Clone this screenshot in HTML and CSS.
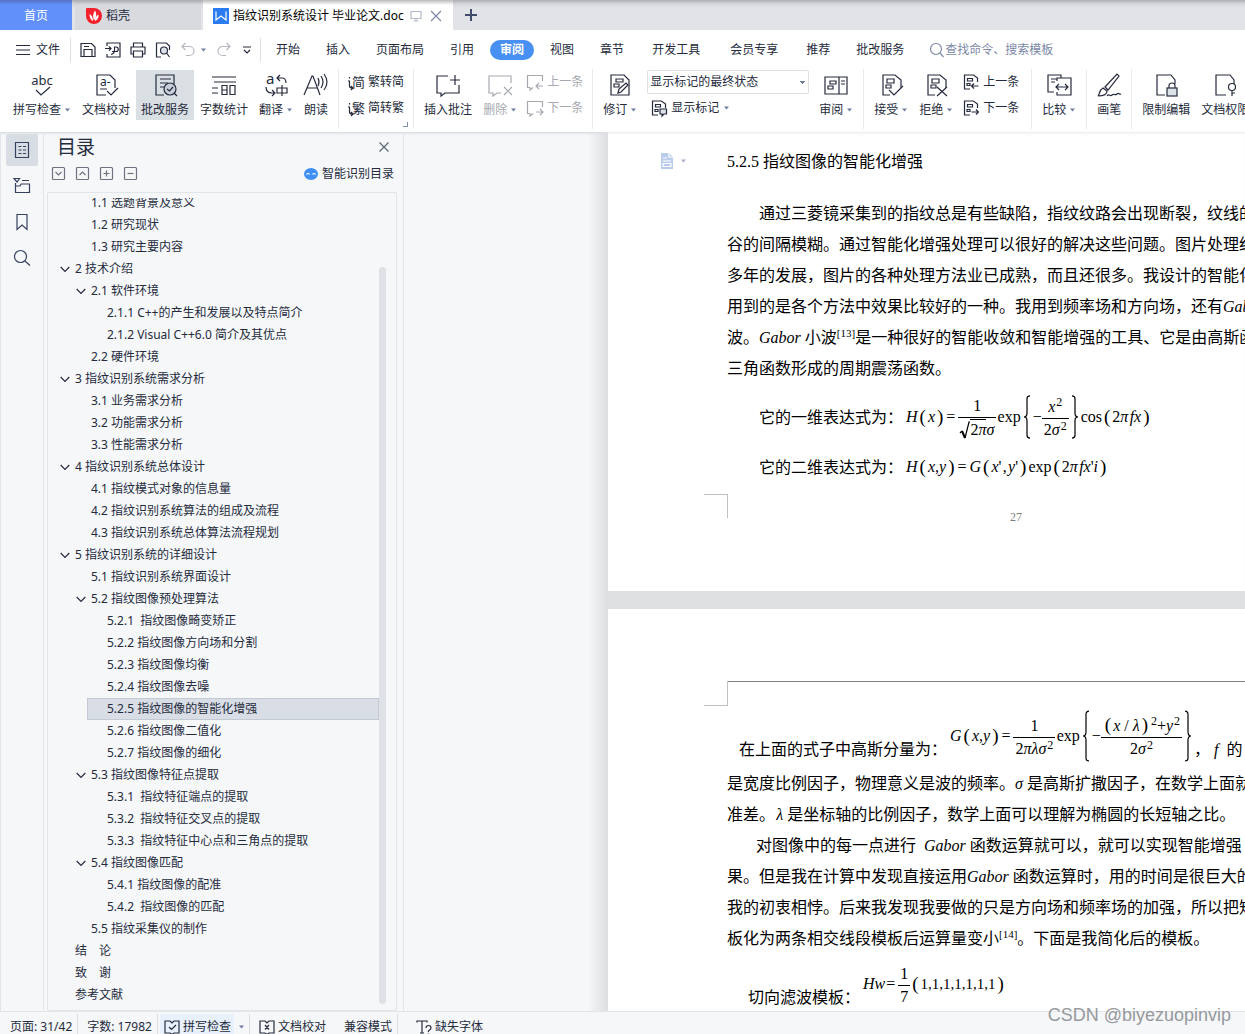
FILE: index.html
```html
<!DOCTYPE html>
<html lang="zh-CN">
<head>
<meta charset="utf-8">
<title>指纹识别系统设计 毕业论文.doc</title>
<link rel="stylesheet" href="styles.css">
</head>
<body>
<svg class="defs" aria-hidden="true">
  <symbol id="caret" viewBox="0 0 7 4"><path d="M1 0.5h5L3.500 3.500z" fill="#6f7ba0" stroke="none"/></symbol>
  <symbol id="chev" viewBox="0 0 10 10"><path d="M0.700 3l4.300 4.300L9.300 3"/></symbol>
  <symbol id="markdoc" viewBox="0 0 24 24"><path d="M11 22H4V2h12l6 5v8M8 6h7v4H8zM7 12h5v3H7z"/></symbol>
  <symbol id="markprev" viewBox="0 0 16 16"><path d="M7 15H1.500V1h9l4 3v4M4.500 4.500h5v2.500h-5zM4 9.500h3v2H4zM15.500 12H8.500M11 9.500L8.500 12l2.500 2.500"/></symbol>
  <symbol id="marknext" viewBox="0 0 16 16"><path d="M7 15H1.500V1h9l4 3v4M4.500 4.500h5v2.500h-5zM4 9.500h3v2H4zM8.500 12h7M13 9.500l2.500 2.500-2.500 2.500"/></symbol>
  <symbol id="brace" viewBox="0 0 8 48" preserveAspectRatio="none"><path d="M7 1Q4 1 4 4V20Q4 24 1 24Q4 24 4 28V44Q4 47 7 47" vector-effect="non-scaling-stroke"/></symbol>
</svg>

<header class="tabbar">
  <button class="tab tab-home">首页</button>
  <button class="tab tab-docer"><svg class="i16" viewBox="0 0 16 16" stroke="none"><path d="M8 0H1a1 1 0 0 0-1 1v7a8 8 0 1 0 8-8z" fill="#f5222d" stroke="none"/><path d="M9 2.500c2 3 1.500 7-1 10C6.500 9 7 5 9 2.500zM3.500 6C6 7.500 7 9.500 7 13 4.500 12 3.500 9 3.500 6zM12.500 6.500c.5 3-1 5.500-3.500 6.500 0-3 1-5 3.500-6.500z" fill="#fff" stroke="none"/></svg>稻壳</button>
  <div class="tab tab-doc"><svg class="i16" viewBox="0 0 16 16"><rect width="16" height="16" fill="#2b7cf0" stroke="none"/><path d="M3 3.500v8.500l5-4 5 4V3.500" stroke="#fff"/></svg><span>指纹识别系统设计 毕业论文.doc</span>
    <svg class="i12 faint" viewBox="0 0 12 12"><path d="M1 1.500h10v7H1zM6 8.500v2.500M3.500 11h5"/></svg>
    <button class="plain" aria-label="关闭标签"><svg class="i12 mid" viewBox="0 0 12 12"><path d="M1 1l10 10M11 1L1 11"/></svg></button></div>
  <button class="plain newtab" aria-label="新建"><svg class="i12" viewBox="0 0 12 12"><path d="M6 0v12M0 6h12"/></svg></button>
</header>

<nav class="menubar">
  <button class="plain file"><svg class="i14" viewBox="0 0 14 14"><path d="M0 2.500h14M0 7h14M0 11.500h14"/></svg>文件</button>
  <div class="quick">
    <button class="plain" aria-label="保存"><svg class="i16" viewBox="0 0 16 16"><path d="M1 1.500h10.500L15 5v9.500H1zM4 14.500V7.500h8v7M4 4.500h5"/></svg></button>
    <button class="plain" aria-label="输出为PDF"><svg class="i16" viewBox="0 0 16 16"><path d="M2 4V1h13v14H2v-3M0 6.500h6M4 4.500l2 2-2 2M6 12.500c3-.5 4-3 3.500-7.500h1.500a2 2 0 0 1 0 4.500H7"/></svg></button>
    <button class="plain" aria-label="打印"><svg class="i16" viewBox="0 0 16 16"><path d="M3.500 5V1h9v4M3.500 12H1V5h14v7h-2.500M3.500 9h9v6h-9z"/></svg></button>
    <button class="plain" aria-label="打印预览"><svg class="i16" viewBox="0 0 16 16"><path d="M6 15H1.500V1h10l3 3v4"/><circle cx="9" cy="8.500" r="3.500" fill="#dde1e8"/><path d="M11.500 11l3 4"/></svg></button>
    <button class="plain undo" aria-label="撤销"><svg class="i16 pale" viewBox="0 0 16 16"><path d="M5.500 1L2 4.500 5.500 8M2 4.500h7.500a4.500 4.500 0 0 1 0 9H6"/></svg><svg class="caret"><use href="#caret"/></svg></button>
    <button class="plain redo" aria-label="恢复"><svg class="i16 pale" viewBox="0 0 16 16"><path d="M10.500 1L14 4.500 10.500 8M14 4.500H6.500a4.500 4.500 0 0 0 0 9H10"/></svg></button>
    <button class="plain" aria-label="自定义"><svg class="i12" viewBox="0 0 12 12"><path d="M2 3h8M3 6l3 3 3-3"/></svg></button>
  </div>
  <div class="menus">
    <button class="menu">开始</button><button class="menu">插入</button><button class="menu">页面布局</button><button class="menu">引用</button><button class="menu active">审阅</button><button class="menu">视图</button><button class="menu">章节</button><button class="menu wide">开发工具</button><button class="menu wide">会员专享</button><button class="menu">推荐</button><button class="menu">批改服务</button>
  </div>
  <label class="search"><svg class="i16 mid" viewBox="0 0 16 16"><circle cx="7" cy="7" r="5.500"/><path d="M11 11l3.500 4"/></svg><input type="text" placeholder="查找命令、搜索模板" aria-label="查找命令、搜索模板"></label>
</nav>

<div class="ribbon">
  <div class="group">
    <button class="big"><svg class="i24" viewBox="0 0 24 24"><text x="12" y="12" text-anchor="middle" class="t13">abc</text><path d="M6 17l5 5 9-8"/></svg><span>拼写检查<svg class="caret"><use href="#caret"/></svg></span></button>
    <button class="big"><svg class="i24" viewBox="0 0 24 24"><path d="M12 22H3V2h13l5 5v8M6 16h7M13 18l4 4 7-7"/><text x="6" y="13" class="t12">a-</text></svg><span>文档校对</span></button>
    <button class="big on"><svg class="i24" viewBox="0 0 24 24"><path d="M11 22H3V2h18v9M7 6h11M7 10h8M7 14h4"/><circle cx="17" cy="16" r="6" fill="#c9ced8"/><path d="M21 20l3 3M14 16l2.500 2 3.500-4"/></svg><span>批改服务</span></button>
    <button class="big"><svg class="i24" viewBox="0 0 24 24"><path d="M0 4h24M2 9h22M0 15h6M0 20h6M10 12.500h5v9h-5zM10 17h5M18 12.500h5v9h-5z"/></svg><span>字数统计</span></button>
    <button class="big"><svg class="i24" viewBox="0 0 24 24"><text x="2" y="11" class="t15">a</text><path d="M16 2l-3 3 3 3M13 5h5q4 0 4 5M2 14q0 6 6 6h2M8 17l3 3-3 3M13 15h10v5H13zM18 12v11"/></svg><span>翻译<svg class="caret"><use href="#caret"/></svg></span></button>
    <button class="big"><svg class="i24" viewBox="0 0 24 24"><path d="M0 22L8 3h1l7 19M3 15h10M14 5q2 4 0 8M17 3q4 6 0 12M20 1q6 8 0 16"/></svg><span>朗读</span></button>
  </div>
  <div class="group corner">
    <div class="stack">
      <button class="small"><svg class="i16" viewBox="0 0 16 16"><text x="4" y="13" class="t13">简</text><path d="M1.500 3v1.500M0 7h1.500v5q0 2 3 2M3 12l2 2-2 2"/></svg>繁转简</button>
      <button class="small"><svg class="i16" viewBox="0 0 16 16"><text x="4" y="13" class="t13">繁</text><path d="M1.500 3v1.500M0 7h1.500v5q0 2 3 2M3 12l2 2-2 2"/></svg>简转繁</button>
    </div>
  </div>
  <div class="group">
    <button class="big"><svg class="i24" viewBox="0 0 24 24"><path d="M12 3H1v17h4v3l4-3h14v-8M19 2v10M14 7h10"/></svg><span>插入批注</span></button>
    <button class="big off"><svg class="i24" viewBox="0 0 24 24"><path d="M23 10V3H1v17h4v3l4-3h4M16 14l8 8M24 14l-8 8"/></svg><span>删除<svg class="caret"><use href="#caret"/></svg></span></button>
    <div class="stack">
      <button class="small off"><svg class="i16" viewBox="0 0 16 16"><path d="M15.500 7V1.500H.5v12H3V16l3-2.500M16 12H9M12 9l-3 3 3 3"/></svg>上一条</button>
      <button class="small off"><svg class="i16" viewBox="0 0 16 16"><path d="M15.500 7V1.500H.5v12H3V16l3-2.500M9 12h7M13 9l3 3-3 3"/></svg>下一条</button>
    </div>
  </div>
  <div class="group">
    <button class="big"><svg class="i24" viewBox="0 0 24 24"><path d="M3 22V2h13l5 5v15zM8 6h7v3H8zM6 11h5v3H6z"/><path d="M10 20l1-4 7-6 2 2-7 7z" fill="#fff"/></svg><span>修订<svg class="caret"><use href="#caret"/></svg></span></button>
    <div class="stack">
      <select class="view" aria-label="显示状态"><option>显示标记的最终状态</option></select>
      <button class="small marks"><svg class="i16" viewBox="0 0 16 16"><path d="M7 15H1.500V1h9l4 3v4M4.500 4.500h5v2.500h-5zM4 9.500h3v2H4z"/><path d="M9 9h6.500v5H13l-2 2v-2H9z" fill="#dde1e8"/></svg>显示标记<svg class="caret"><use href="#caret"/></svg></button>
    </div>
    <button class="big"><svg class="i24" viewBox="0 0 24 24"><path d="M1 4h22v17H1zM15 4v17M6 8h6v3H6zM4 13h5v3H4zM17 8h4M17 11h4"/></svg><span>审阅<svg class="caret"><use href="#caret"/></svg></span></button>
  </div>
  <div class="group roomy">
    <button class="big"><svg class="i24" viewBox="0 0 24 24"><use href="#markdoc"/><path d="M10 17l5 5 9-9"/></svg><span>接受<svg class="caret"><use href="#caret"/></svg></span></button>
    <button class="big"><svg class="i24" viewBox="0 0 24 24"><use href="#markdoc"/><path d="M13 14l10 9M23 14l-10 9"/></svg><span>拒绝<svg class="caret"><use href="#caret"/></svg></span></button>
    <div class="stack">
      <button class="small"><svg class="i16"><use href="#markprev"/></svg>上一条</button>
      <button class="small"><svg class="i16"><use href="#marknext"/></svg>下一条</button>
    </div>
  </div>
  <div class="group">
    <button class="big"><svg class="i24" viewBox="0 0 24 24"><path d="M7 19H1V2h13v3M4 6h6M4 9h4M10 8V5h14v17H10v-3M9 14h12M12 11l-3 3 3 3M18 11l3 3-3 3"/></svg><span>比较<svg class="caret"><use href="#caret"/></svg></span></button>
  </div>
  <div class="group">
    <button class="big"><svg class="i24" viewBox="0 0 24 24"><path d="M8 14L20 1l2 2-11 14zM1 23c2-2 1-6 5-8l4 3c0 4-5 5-9 5M10 23c2-3 3 1 5-1s3 1 5-1 2 1 4 0"/></svg><span>画笔</span></button>
  </div>
  <div class="group last">
    <button class="big"><svg class="i24" viewBox="0 0 24 24"><path d="M11 22H3V2h14l4 5v4"/><path d="M15 15v-2a3 3 0 0 1 6 0v2"/><rect x="13" y="15" width="10" height="8" fill="#dde1e8"/></svg><span>限制编辑</span></button>
    <button class="big"><svg class="i24" viewBox="0 0 24 24"><path d="M13 22H3V2h14l4 5v4"/><circle cx="19" cy="14" r="3.500"/><path d="M19 17.500V23M19 20h3"/></svg><span>文档权限</span></button>
  </div>
</div>

<main class="work">
  <nav class="rail">
    <button class="railbtn on" aria-label="目录"><svg class="i16" viewBox="0 0 16 16"><path d="M1.500.5h13v15h-13zM4.500 4.500h3M4.500 8h3M4.500 11.500h3M9 4.500h3M9 8h3M9 11.500h3"/></svg></button>
    <button class="railbtn" aria-label="章节"><svg class="i16" viewBox="0 0 16 16"><path d="M0 .5h5.500L3 4zM8 2.500h7M1.500 5v9.500h14V6H7L6 8H1.500"/></svg></button>
    <button class="railbtn" aria-label="书签"><svg class="i16" viewBox="0 0 16 16"><path d="M3 .5h10v15l-5-4.500-5 4.500z"/></svg></button>
    <button class="railbtn" aria-label="查找"><svg class="i16" viewBox="0 0 16 16"><circle cx="6.500" cy="6.500" r="6"/><path d="M11 11l5 4.500"/></svg></button>
  </nav>
  <aside class="panel">
    <div class="panel-head"><h2>目录</h2><button class="plain" aria-label="关闭"><svg class="i10" viewBox="0 0 10 10"><path d="M.5.5l9 9M9.500.5l-9 9"/></svg></button></div>
    <div class="tools">
      <button class="plain" aria-label="展开"><svg class="i14" viewBox="0 0 14 14"><rect x=".5" y=".5" width="12" height="12" rx="1"/><path d="M3.500 5l3 3 3-3"/></svg></button>
      <button class="plain" aria-label="收起"><svg class="i14" viewBox="0 0 14 14"><rect x=".5" y=".5" width="12" height="12" rx="1"/><path d="M3.500 8l3-3 3 3"/></svg></button>
      <button class="plain" aria-label="增加"><svg class="i14" viewBox="0 0 14 14"><rect x=".5" y=".5" width="12" height="12" rx="1"/><path d="M3.500 6.500h6M6.500 3.500v6"/></svg></button>
      <button class="plain" aria-label="减少"><svg class="i14" viewBox="0 0 14 14"><rect x=".5" y=".5" width="12" height="12" rx="1"/><path d="M3.500 6.500h6"/></svg></button>
      <button class="plain smart"><svg class="i14" viewBox="0 0 14 14"><ellipse cx="7" cy="7" rx="7" ry="6" fill="#3f8ff5" stroke="none"/><path d="M2.500 7.500q1.500-2 3 0M8.500 7.500q1.500-2 3 0" stroke="#fff"/></svg>智能识别目录</button>
    </div>
    <div class="listbox">
      <ul class="toc">
        <li class="l2">1.1 选题背景及意义</li>
        <li class="l2">1.2 研究现状</li>
        <li class="l2">1.3 研究主要内容</li>
        <li class="l1"><svg class="chev"><use href="#chev"/></svg>2 技术介绍</li>
        <li class="l2"><svg class="chev"><use href="#chev"/></svg>2.1 软件环境</li>
        <li class="l3">2.1.1 C++的产生和发展以及特点简介</li>
        <li class="l3">2.1.2 Visual C++6.0 简介及其优点</li>
        <li class="l2">2.2 硬件环境</li>
        <li class="l1"><svg class="chev"><use href="#chev"/></svg>3 指纹识别系统需求分析</li>
        <li class="l2">3.1 业务需求分析</li>
        <li class="l2">3.2 功能需求分析</li>
        <li class="l2">3.3 性能需求分析</li>
        <li class="l1"><svg class="chev"><use href="#chev"/></svg>4 指纹识别系统总体设计</li>
        <li class="l2">4.1 指纹模式对象的信息量</li>
        <li class="l2">4.2 指纹识别系统算法的组成及流程</li>
        <li class="l2">4.3 指纹识别系统总体算法流程规划</li>
        <li class="l1"><svg class="chev"><use href="#chev"/></svg>5 指纹识别系统的详细设计</li>
        <li class="l2">5.1 指纹识别系统界面设计</li>
        <li class="l2"><svg class="chev"><use href="#chev"/></svg>5.2 指纹图像预处理算法</li>
        <li class="l3">5.2.1&nbsp; 指纹图像畸变矫正</li>
        <li class="l3">5.2.2 指纹图像方向场和分割</li>
        <li class="l3">5.2.3 指纹图像均衡</li>
        <li class="l3">5.2.4 指纹图像去噪</li>
        <li class="l3 sel">5.2.5 指纹图像的智能化增强</li>
        <li class="l3">5.2.6 指纹图像二值化</li>
        <li class="l3">5.2.7 指纹图像的细化</li>
        <li class="l2"><svg class="chev"><use href="#chev"/></svg>5.3 指纹图像特征点提取</li>
        <li class="l3">5.3.1&nbsp; 指纹特征端点的提取</li>
        <li class="l3">5.3.2&nbsp; 指纹特征交叉点的提取</li>
        <li class="l3">5.3.3&nbsp; 指纹特征中心点和三角点的提取</li>
        <li class="l2"><svg class="chev"><use href="#chev"/></svg>5.4 指纹图像匹配</li>
        <li class="l3">5.4.1 指纹图像的配准</li>
        <li class="l3">5.4.2&nbsp; 指纹图像的匹配</li>
        <li class="l2">5.5 指纹采集仪的制作</li>
        <li class="l1">结　论</li>
        <li class="l1">致　谢</li>
        <li class="l1">参考文献</li>
      </ul>
      <div class="track"><div class="thumb"></div></div>
    </div>
  </aside>
  <section class="canvas">
    <article class="page first">
      <div class="heading"><svg class="i16" viewBox="0 0 16 16"><path d="M2 0h8l4 4v12H2z" fill="#b9cce9" stroke="none"/><path d="M10 0v4h4M4 5h4M4 8h8M4 10.500h8v3H4z" stroke="#fff"/></svg><svg class="caret"><use href="#caret"/></svg><h3>5.2.5 指纹图像的智能化增强</h3></div>
      <div class="text">
        <p class="ind">通过三菱镜采集到的指纹总是有些缺陷，指纹纹路会出现断裂，纹线的</p>
        <p>谷的间隔模糊。通过智能化增强处理可以很好的解决这些问题。图片处理经</p>
        <p>多年的发展，图片的各种处理方法业已成熟，而且还很多。我设计的智能化</p>
        <p>用到的是各个方法中效果比较好的一种。我用到频率场和方向场，还有<i>Gabor</i></p>
        <p>波。<i>Gabor</i> 小波<sup>[13]</sup>是一种很好的智能收敛和智能增强的工具、它是由高斯函</p>
        <p>三角函数形成的周期震荡函数。</p>
      </div>
      <div class="eq eq-a"><span>它的一维表达式为：</span>
        <span class="math"><i>H</i><b>(</b><i>x</i><b>)</b><span class="op">=</span><span class="frac"><span>1</span><span class="den"><svg class="root" viewBox="0 0 10 18"><path d="M0 12l2-2"/><path d="M2 10l3 7" stroke-width="2"/><path d="M5 17L9 1h1"/></svg><span class="rad">2<i>π</i></span><i>σ</i></span></span>&#8202;exp<svg class="brace h44"><use href="#brace"/></svg><span>−</span><span class="frac"><span><i>x</i><sup>2</sup></span><span class="den">2<i>σ</i><sup>2</sup></span></span><svg class="brace h44 flip"><use href="#brace"/></svg>cos<b>(</b>2<i>π</i>&#8202;<i>fx</i><b>)</b></span></div>
      <div class="eq eq-b"><span>它的二维表达式为：</span>
        <span class="math"><i>H</i><b>(</b><i>x</i>,<i>y</i><b>)</b><span class="op">=</span><i>G</i><b>(</b><i>x</i>'&#8202;,&#8202;<i>y</i>'<b>)</b>exp<b>(</b>2<i>π</i>&#8202;<i>fx</i>'<i>i</i><b>)</b></span></div>
      <div class="foot"><div class="crop-bottom"></div><span>27</span></div>
    </article>
    <article class="page second">
      <div class="head"><div class="crop-top"></div><div class="rule"></div></div>
      <div class="eq eq-c"><span>在上面的式子中高斯分量为：</span>
        <span class="math raised"><i>G</i><b>(</b><i>x</i>,<i>y</i><b>)</b><span class="op">=</span><span class="frac"><span>1</span><span class="den">2<i>πλσ</i><sup>2</sup></span></span>&#8202;exp<svg class="brace h52"><use href="#brace"/></svg><span>−</span><span class="frac"><span><b>(</b><i>x</i> / <i>λ</i><b>)</b><sup>2</sup>+<i>y</i><sup>2</sup></span><span class="den">2<i>σ</i><sup>2</sup></span></span><svg class="brace h52 flip"><use href="#brace"/></svg></span><span>，&nbsp;<i>f</i>&nbsp; 的</span></div>
      <div class="text">
        <p>是宽度比例因子，物理意义是波的频率。<i>σ</i> 是高斯扩撒因子，在数学上面就</p>
        <p>准差。&#8202;<i>λ</i> 是坐标轴的比例因子，数学上面可以理解为椭圆的长短轴之比。</p>
        <p class="ind">对图像中的每一点进行&nbsp; <i>Gabor</i> 函数运算就可以，就可以实现智能增强</p>
        <p>果。但是我在计算中发现直接运用<i>Gabor</i> 函数运算时，用的时间是很巨大的</p>
        <p>我的初衷相悖。后来我发现我要做的只是方向场和频率场的加强，所以把矩</p>
        <p>板化为两条相交线段模板后运算量变小<sup>[14]</sup>。下面是我简化后的模板。</p>
      </div>
      <div class="eq eq-d"><span>切向滤波模板：</span>
        <span class="math raised"><i>Hw</i><span class="op">=</span><span class="frac"><span>1</span><span class="den">7</span></span><b>(</b><span class="nums">1,1,1,1,1,1,1</span><b>)</b></span></div>
    </article>
  </section>
</main>

<footer class="status">
  <span class="st">页面: 31/42</span><span class="st">字数: 17982</span>
  <button class="st hot"><span><svg class="i16" viewBox="0 0 16 16"><path d="M6 2H1v12h5l2 1.500L10 14h5V2h-5L8 4zM5 8l2.500 2.500L12 6"/></svg>拼写检查</span><svg class="caret"><use href="#caret"/></svg></button>
  <button class="st open"><svg class="i16" viewBox="0 0 16 16"><path d="M6 2H1v12h5l2 1.500L10 14h5V2h-5L8 4zM6 6l4 4.500M10 6l-4 4.500"/></svg>文档校对</button>
  <button class="st compat">兼容模式</button>
  <button class="st open"><svg class="i16" viewBox="0 0 16 16"><path d="M1 3.500V2h10v1.500M6 2v12M4 14h4M10 9q0-2.500 2.500-2.500T15 9q0 1-1.500 2t-1 2M12.500 14.500v1"/></svg>缺失字体</button>
</footer>
<div class="watermark">CSDN @biyezuopinvip</div>
</body>
</html>
```
FILE: styles.css
```css
* { box-sizing: border-box; }
body {
  margin: 0;
  height: 100vh;
  display: flex;
  flex-direction: column;
  overflow: hidden;
  background: #fff;
  color: #252b3d;
  font: 12px/16px "Noto Sans", "Noto Sans CJK SC", sans-serif;
}
button, input, select { font: inherit; color: inherit; }
button { border: 0; background: none; padding: 0; white-space: nowrap; flex: none; }
svg { fill: none; stroke: currentColor; stroke-width: 1.2; flex: none; display: block; overflow: visible; }
svg text { fill: currentColor; stroke: none; }
h2, h3, p, ul { margin: 0; padding: 0; font-weight: 400; }
.defs { position: absolute; width: 0; height: 0; overflow: hidden; }
.plain { display: flex; align-items: center; }
.i10 { width: 10px; height: 10px; }
.i12 { width: 12px; height: 12px; }
.i14 { width: 14px; height: 14px; }
.i16 { width: 16px; height: 16px; }
.i24 { width: 24px; height: 24px; }
.t12 { font-size: 12px; }
.t13 { font-size: 13px; }
.t15 { font-size: 15px; }
.caret { width: 7px; height: 4px; }
.faint { color: #b3bccd; }
.mid { color: #7c88a6; }
.pale { color: #b4b8c0; }

/* document tabs */
.tabbar {
  flex: none;
  height: 30px;
  display: flex;
  background: linear-gradient(#aeafb2, #d5d6da 4px, #e2e3e7 8px);
}
.tab { display: flex; align-items: center; gap: 4px; height: 30px; padding-top: 2px; }
.tab-home { width: 72px; justify-content: center; background: linear-gradient(#5573c4, #6190fb 5px); color: #fff; }
.tab-docer { width: 126px; margin-left: 3px; padding-left: 11px; background: linear-gradient(#a9aaad, #d9dadd 5px); }
.tab-doc { width: 250px; margin-left: 2px; padding: 2px 10px 0; background: linear-gradient(#bbb, #fff 5px); color: #000; white-space: nowrap; }
.tab-doc .faint { margin-left: 2px; }
.tab-doc .plain { margin-left: 4px; }
.newtab { padding: 0 12px; color: #414b6b; }
.newtab svg { stroke-width: 2; }

/* menu row */
.menubar { flex: none; height: 38px; display: flex; align-items: center; padding-top: 1px; }
.file { gap: 6px; padding: 0 10px 0 16px; }
.quick { display: flex; align-items: center; gap: 9px; height: 24px; padding: 0 7px 0 9px; border: solid #dcdfe4; border-width: 0 1px; }
.undo { gap: 4px; }
.menus { display: flex; padding-left: 2px; }
.menu { height: 20px; padding: 0 13px; }
.menu.wide { padding: 0 15px; }
.menu.active { margin: 0 3px; padding: 0 10px; border-radius: 10px; background: #4890f3; color: #fff; font-weight: 700; }
.search { display: flex; align-items: center; padding-left: 12px; }
.search input { border: 0; outline: 0; padding: 0; width: 120px; background: none; }
.search input::placeholder { color: #7c88a6; opacity: 1; }

/* ribbon */
.ribbon { flex: none; display: flex; height: 64px; padding: 1px 0 3px 3px; overflow: hidden; }
.group { flex: none; display: flex; gap: 1px; align-items: flex-start; padding: 1px 5px; border-right: 1px solid #e9ebef; }
.group.roomy { padding-right: 8px; }
.group.last { border: 0; }
.corner { background: linear-gradient(#8490ad, #8490ad) right 5px bottom 2px / 5px 1px no-repeat, linear-gradient(#8490ad, #8490ad) right 5px bottom 2px / 1px 5px no-repeat; }
.big { display: flex; flex-direction: column; align-items: center; gap: 5px; height: 50px; padding: 3px 5px; }
.big span { display: flex; align-items: center; }
.big .caret { margin-left: 3px; }
.on { background: #dadfe4; }
.off { color: #a6a9b0; }
.stack { display: flex; flex-direction: column; gap: 2px; padding: 0 4px; }
.small { display: flex; align-items: center; gap: 4px; height: 24px; }
.marks { padding-left: 4px; }
.view {
  width: 162px;
  height: 24px;
  padding: 0 2px;
  appearance: none;
  border: 1px solid #dcdfe4;
  border-radius: 2px;
  background: linear-gradient(45deg, transparent 50%, #6f7ba0 50%) right 6px center / 3px 3px no-repeat, linear-gradient(315deg, transparent 50%, #6f7ba0 50%) right 3px center / 3px 3px no-repeat, #fff;
}

/* work area */
.work { flex: 1; min-height: 0; display: flex; background: #f5f7f9; border-bottom: 1px solid #e2e5ea; box-shadow: inset 0 3px 3px -2px #cfd3d8; }
.rail { flex: none; width: 44px; display: flex; flex-direction: column; gap: 4px; padding: 2px 0 0 5px; border: solid #e2e5ea; border-width: 0 1px; }
.railbtn { width: 32px; height: 32px; display: flex; align-items: center; justify-content: center; border-radius: 2px; color: #36415f; }
.railbtn.on { background: #d8dde4; }
.panel { flex: none; width: 360px; display: flex; flex-direction: column; padding: 0 6px 0 3px; border-right: 1px solid #e2e5ea; }
.panel-head { display: flex; align-items: center; justify-content: space-between; height: 30px; padding: 0 8px 0 10px; }
.panel-head h2 { font-size: 19px; line-height: 28px; }
.panel-head button { color: #5d6676; }
.tools { display: flex; align-items: center; gap: 10px; height: 24px; padding: 0 3px 0 5px; color: #6d737e; }
.smart { margin-left: auto; gap: 4px; color: #252b3d; }
.listbox { flex: 1; min-height: 0; display: flex; margin-top: 6px; padding-top: 5px; border: 1px solid #e2e5ea; border-radius: 2px; }
.toc { flex: 1; overflow: hidden; list-style: none; }
.toc li { height: 22px; line-height: 20px; border: 1px solid transparent; display: flex; align-items: center; white-space: pre; padding-left: 19px; }
.toc li:first-child { margin-top: -6px; }
.toc .l1 { margin-left: 7px; }
.toc .l2 { margin-left: 23px; }
.toc .l3 { margin-left: 39px; }
.toc .sel { background: #d9dde5; border-color: #c3cad3; }
.chev { width: 10px; height: 10px; margin: 0 5px 0 -15px; }
.track { display: flex; width: 17px; padding: 69px 10px 6px 0; }
.thumb { flex: 1; border-radius: 4px; background: #dee2e6; }

/* document canvas */
.canvas {
  flex: 1;
  min-width: 0;
  display: flex;
  flex-direction: column;
  gap: 18px;
  padding-left: 204px;
  overflow: hidden;
  background: linear-gradient(90deg, transparent 184px, #dcdee1 204px, #dfe0e2 204px);
  color: #000;
  font: 16px/31px "Liberation Serif", "Noto Sans CJK SC", serif;
  white-space: nowrap;
}
.page { flex: none; background: #fff; overflow: hidden; box-shadow: inset 0 3px 3px -2px #e4e6e8; }
.page.first { padding-bottom: 73px; }
.page.second { flex: 1; box-shadow: none; }
.heading { display: flex; align-items: center; gap: 5px; height: 58px; padding-left: 51px; }
.heading h3 { font-size: 16px; padding-left: 35px; }
.heading .caret { opacity: .6; }
.text { padding: 8px 0 0 119px; }
.second .text { padding-top: 0; }
.text p { height: 31px; }
.text .ind { padding-left: 32px; }
.second .text .ind { padding-left: 29px; }
sup { font-size: 11px; line-height: 0; vertical-align: 6px; }
.eq { display: flex; align-items: center; }
.eq-a { height: 66px; padding-left: 151px; }
.eq-b { height: 34px; padding-left: 151px; }
.eq-c { height: 62px; padding: 24px 0 0 131px; }
.eq-d { height: 62px; padding: 24px 0 0 140px; }
.math { display: flex; align-items: center; line-height: 20px; white-space: pre; margin-left: 3px; }
.math.raised { margin-top: -26px; }
.math b { font-weight: 400; font-size: 19px; padding: 0 2px; }
.math sup { font-size: 12px; padding-left: 1px; }
.op { padding: 0 3px 0 1px; }
.frac { display: flex; flex-direction: column; align-items: center; }
.frac > span { display: block; padding: 2px 2px 1px; }
.frac > .den { display: flex; align-items: center; border-top: 1px solid #000; align-self: stretch; justify-content: center; padding: 1px 2px 0; }
.den sup { align-self: flex-start; padding-top: 6px; }
.rad { border-top: 1px solid #000; }
.root { width: 10px; height: 20px; }
.brace { width: 8px; margin: 0 2px; }
.h44 { height: 44px; }
.h52 { height: 52px; }
.flip { transform: scaleX(-1); }
.nums { font-size: 15px; }
.foot { display: flex; height: 34px; padding: 10px 0 0 96px; }
.crop-bottom, .crop-top { width: 24px; height: 24px; border: solid #c0c0c0; border-width: 1px 1px 0 0; }
.foot span { margin-left: 282px; padding-top: 17px; font-size: 12px; line-height: 12px; color: #808080; }
.head { display: flex; align-items: flex-start; padding: 72px 0 0 96px; }
.crop-top { height: 25px; border-width: 0 1px 1px 0; }
.rule { flex: 1; height: 1px; background: #808080; }

/* status bar */
.status { flex: none; display: flex; height: 22px; background: #f5f7f9; padding: 2px 0 0 5px; }
.st { display: flex; align-items: center; gap: 3px; padding: 6px 5px 0 5px; white-space: nowrap; border-right: 1px solid #dcdfe4; }
.st + .st { padding-left: 9px; }
.st + .hot { padding: 0 4px 0 2px; gap: 4px; }
.hot span { display: flex; align-items: center; gap: 3px; height: 20px; padding: 6px 3px 0 4px; background: #e8f0fb; }
.hot .caret { margin-top: 6px; }
.st + .open { border: 0; gap: 3px; }
.st + .compat { padding-left: 13px; }
.compat + .open { padding-left: 18px; }
.watermark { position: absolute; right: 14px; bottom: 8px; font: 18px/22px "Liberation Sans", sans-serif; color: #8d8f94; opacity: .9; }
```
